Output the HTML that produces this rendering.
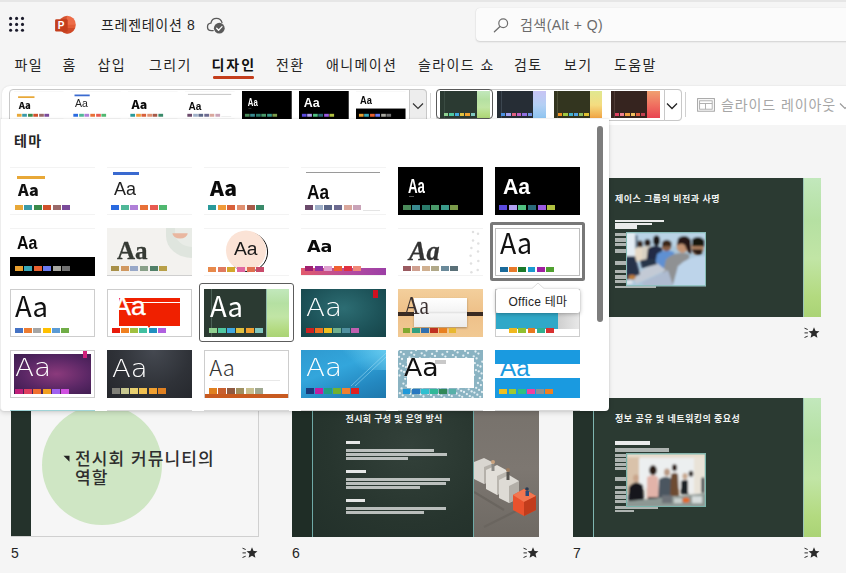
<!DOCTYPE html>
<html lang="ko"><head><meta charset="utf-8"><title>PowerPoint</title>
<style>
*{box-sizing:border-box;margin:0;padding:0}
html,body{width:846px;height:573px;overflow:hidden}
body{position:relative;background:#f5f5f5;font-family:"Liberation Sans","Noto Sans CJK KR","NanumGothic",sans-serif;color:#242424}
.a{position:absolute}
.t{position:absolute;white-space:nowrap;line-height:1}
.tab{position:absolute;top:54.5px;font-size:14px;line-height:20px;color:#242424;white-space:nowrap;letter-spacing:1.4px}
.sw{position:absolute;display:flex}
.sw i{display:block;flex:none}
.th{position:absolute;overflow:hidden}
.aa{position:absolute;white-space:nowrap;line-height:1}
.sl{position:absolute;overflow:hidden}
.num{position:absolute;font-size:14px;line-height:1;color:#242424}
</style></head>
<body>
<div class="a" style="left:0;top:0;width:846px;height:86px;background:#f5f5f5"></div>
<div class="a" style="left:0;top:0;width:846px;height:1.5px;background:#e6e6e6"></div>
<svg class="a" style="left:0;top:0" width="40" height="45" fill="#1b1b2b"><circle cx="10.6" cy="18.4" r="1.55"/><circle cx="16.6" cy="18.4" r="1.55"/><circle cx="22.5" cy="18.4" r="1.55"/><circle cx="10.6" cy="24.4" r="1.55"/><circle cx="16.6" cy="24.4" r="1.55"/><circle cx="22.5" cy="24.4" r="1.55"/><circle cx="10.6" cy="30.3" r="1.55"/><circle cx="16.6" cy="30.3" r="1.55"/><circle cx="22.5" cy="30.3" r="1.55"/></svg>
<svg class="a" style="left:52px;top:12px" width="28" height="26" viewBox="52 12 28 26">
<defs><clipPath id="pc"><ellipse cx="67.3" cy="24.7" rx="8.5" ry="9"/></clipPath></defs>
<g clip-path="url(#pc)"><rect x="56" y="14" width="11" height="22" fill="#d35230"/><rect x="66.7" y="14" width="12" height="11" fill="#ed6c47"/><rect x="66.7" y="24.8" width="12" height="12" fill="#e25c35"/><rect x="58" y="28" width="20" height="10" fill="#c13b1b" opacity=".55"/></g>
<rect x="55.1" y="19.2" width="12.6" height="12.3" rx="1.2" fill="#c43e1c"/>
<text x="61" y="29.1" font-family="Liberation Sans,sans-serif" font-weight="700" font-size="10" fill="#fff" text-anchor="middle">P</text></svg>
<div class="t" style="left:101px;top:16.5px;font-size:14px;line-height:16px;letter-spacing:.7px;color:#242424">프레젠테이션 8</div>
<svg class="a" style="left:205px;top:14px" width="24" height="22" viewBox="205 14 24 22">
<path d="M213.2 30.6h-1.8c-2.2 0-3.9-1.6-3.9-3.7 0-2 1.5-3.5 3.4-3.7.5-2.9 2.7-4.9 5.6-4.9 2.7 0 4.9 1.8 5.5 4.3" fill="none" stroke="#5a5a5a" stroke-width="1.3" stroke-linecap="round"/>
<circle cx="219.3" cy="28.2" r="5.4" fill="#5a5a5a"/>
<path d="M216.7 28.3l1.9 1.9 3.4-3.6" fill="none" stroke="#fff" stroke-width="1.3" stroke-linecap="round" stroke-linejoin="round"/></svg>
<div class="a" style="left:476px;top:8px;width:380px;height:33px;background:#fbfbfb;border-radius:4px;box-shadow:0 1px 2px rgba(0,0,0,.14),0 0 1px rgba(0,0,0,.12)"></div>
<svg class="a" style="left:490px;top:15px" width="22" height="20" viewBox="490 15 22 20"><circle cx="503.2" cy="23.3" r="4.4" fill="none" stroke="#6e6e6e" stroke-width="1.2"/><path d="M500 26.6l-5.6 5.2" stroke="#6e6e6e" stroke-width="1.3" stroke-linecap="round"/></svg>
<div class="t" style="left:520px;top:17px;font-size:14px;line-height:16px;letter-spacing:.45px;color:#6b6b6b">검색(Alt + Q)</div>
<div class="tab" style="left:14.4px">파일</div>
<div class="tab" style="left:62.4px">홈</div>
<div class="tab" style="left:97.5px">삽입</div>
<div class="tab" style="left:149px">그리기</div>
<div class="tab" style="left:211.6px;font-weight:700;color:#111;letter-spacing:1.9px">디자인</div>
<div class="tab" style="left:276px">전환</div>
<div class="tab" style="left:326px">애니메이션</div>
<div class="tab" style="left:418px">슬라이드 쇼</div>
<div class="tab" style="left:514px">검토</div>
<div class="tab" style="left:564px">보기</div>
<div class="tab" style="left:614px">도움말</div>
<div class="a" style="left:212.5px;top:76.3px;width:41.5px;height:2.6px;border-radius:1.3px;background:#c43e1c"></div>
<div class="a" style="left:2px;top:86px;width:860px;height:39.3px;background:#fff;border-top-left-radius:8px;box-shadow:0 0 2px rgba(0,0,0,.12)"></div>
<div class="a" style="left:9px;top:89px;width:418px;height:40px;border:1px solid #c8c8c8;border-radius:4px;background:#fff"></div>
<div class="th" style="left:14px;top:90.75px;width:85px;height:48px;background:#fff;transform:scale(0.5850);transform-origin:0 0"><div class="a" style="left:7px;top:9px;width:28px;height:3px;background:#e8a838"></div><div class="aa" style="left:8.16px;top:15.65px;font:normal 900 15.26px/1 'Noto Sans CJK KR',sans-serif;color:#111;transform:scaleX(1.060);transform-origin:0 0">Aa</div><div class="sw" style="left:4.5px;top:38.5px"><i style="width:8px;height:5px;background:#e8a838;margin-right:1.6px"></i><i style="width:8px;height:5px;background:#3a9aa8;margin-right:1.6px"></i><i style="width:8px;height:5px;background:#3a8a4a;margin-right:1.6px"></i><i style="width:8px;height:5px;background:#d0502a;margin-right:1.6px"></i><i style="width:8px;height:5px;background:#9a6a6a;margin-right:1.6px"></i><i style="width:8px;height:5px;background:#7a4a9a;margin-right:1.6px"></i></div><div class="a" style="left:0px;top:0px;width:85px;height:48px;background:transparent;border-top:1px solid #f3f3f3;border-bottom:1px solid #f3f3f3"></div></div>
<div class="th" style="left:71px;top:90.75px;width:85px;height:48px;background:#fff;transform:scale(0.5850);transform-origin:0 0"><div class="a" style="left:5.5px;top:5.5px;width:26.5px;height:3px;background:#3a6ad0"></div><div class="aa" style="left:6.75px;top:13.23px;font:normal 400 18.57px/1 'Liberation Sans',sans-serif;color:#222;transform:scaleX(0.970);transform-origin:0 0">Aa</div><div class="sw" style="left:4.25px;top:38.5px"><i style="width:8px;height:5px;background:#2a6ae0;margin-right:1.6px"></i><i style="width:8px;height:5px;background:#50b898;margin-right:1.6px"></i><i style="width:8px;height:5px;background:#b080d8;margin-right:1.6px"></i><i style="width:8px;height:5px;background:#e87038;margin-right:1.6px"></i><i style="width:8px;height:5px;background:#e85a50;margin-right:1.6px"></i><i style="width:8px;height:5px;background:#50b870;margin-right:1.6px"></i></div><div class="a" style="left:0px;top:0px;width:85px;height:48px;background:transparent;border-top:1px solid #f3f3f3;border-bottom:1px solid #f3f3f3"></div></div>
<div class="th" style="left:128px;top:90.75px;width:85px;height:48px;background:#fff;transform:scale(0.5850);transform-origin:0 0"><div class="aa" style="left:6.21px;top:11.65px;font:normal 900 19.74px/1 'Noto Sans CJK KR',sans-serif;color:#0a0a0a;transform:scaleX(1.070);transform-origin:0 0">Aa</div><div class="sw" style="left:4px;top:38.5px"><i style="width:8px;height:5px;background:#2a9a9a;margin-right:1.6px"></i><i style="width:8px;height:5px;background:#f09a38;margin-right:1.6px"></i><i style="width:8px;height:5px;background:#d8603a;margin-right:1.6px"></i><i style="width:8px;height:5px;background:#e09070;margin-right:1.6px"></i><i style="width:8px;height:5px;background:#a85a48;margin-right:1.6px"></i><i style="width:8px;height:5px;background:#3a8a6a;margin-right:1.6px"></i></div><div class="a" style="left:0px;top:0px;width:85px;height:48px;background:transparent;border-top:1px solid #f3f3f3;border-bottom:1px solid #f3f3f3"></div></div>
<div class="th" style="left:185px;top:90.75px;width:85px;height:48px;background:#fff;transform:scale(0.5850);transform-origin:0 0"><div class="a" style="left:5px;top:5px;width:74px;height:1px;background:#9a9a9a"></div><div class="aa" style="left:5.98px;top:15.00px;font:normal 700 20.00px/1 'Liberation Sans',sans-serif;color:#0a0a0a;transform:scaleX(0.860);transform-origin:0 0">Aa</div><div class="sw" style="left:4px;top:38.5px"><i style="width:8px;height:5px;background:#6b4a6b;margin-right:1.6px"></i><i style="width:8px;height:5px;background:#9fb0c8;margin-right:1.6px"></i><i style="width:8px;height:5px;background:#5b6788;margin-right:1.6px"></i><i style="width:8px;height:5px;background:#6c6a90;margin-right:1.6px"></i><i style="width:8px;height:5px;background:#d9a79c;margin-right:1.6px"></i><i style="width:8px;height:5px;background:#c9a3b8;margin-right:1.6px"></i></div><div class="a" style="left:62px;top:43px;width:17px;height:1px;background:#e4e4e4"></div><div class="a" style="left:0px;top:0px;width:85px;height:48px;background:transparent;border-top:1px solid #f3f3f3;border-bottom:1px solid #f3f3f3"></div></div>
<div class="th" style="left:241.5px;top:90.75px;width:85px;height:48px;background:#000;transform:scale(0.5850);transform-origin:0 0"><div class="aa" style="left:10.35px;top:10.11px;font:normal 700 19.29px/1 'Liberation Sans',sans-serif;color:#fff;transform:scaleX(0.690);transform-origin:0 0">Aa</div><div class="a" style="left:11px;top:29px;width:5px;height:1px;background:#555"></div><div class="sw" style="left:4.5px;top:38.5px"><i style="width:8px;height:5px;background:#4a8a5a;margin-right:1.6px"></i><i style="width:8px;height:5px;background:#3a8a90;margin-right:1.6px"></i><i style="width:8px;height:5px;background:#2a7a6a;margin-right:1.6px"></i><i style="width:8px;height:5px;background:#4a9a6a;margin-right:1.6px"></i><i style="width:8px;height:5px;background:#3a9a8a;margin-right:1.6px"></i><i style="width:8px;height:5px;background:#7a9a4a;margin-right:1.6px"></i></div></div>
<div class="th" style="left:298.5px;top:90.75px;width:85px;height:48px;background:#000;transform:scale(0.5850);transform-origin:0 0"><div class="aa" style="left:7.86px;top:8.54px;font:normal 700 22.86px/1 'Liberation Sans',sans-serif;color:#fff;transform:scaleX(0.930);transform-origin:0 0">Aa</div><div class="sw" style="left:4.5px;top:38.5px"><i style="width:8px;height:5px;background:#5a4ae0;margin-right:1.6px"></i><i style="width:8px;height:5px;background:#b0a0f0;margin-right:1.6px"></i><i style="width:8px;height:5px;background:#50c080;margin-right:1.6px"></i><i style="width:8px;height:5px;background:#2a6a7a;margin-right:1.6px"></i><i style="width:8px;height:5px;background:#9a5ae0;margin-right:1.6px"></i><i style="width:8px;height:5px;background:#b0c040;margin-right:1.6px"></i></div></div>
<div class="th" style="left:355.5px;top:90.75px;width:85px;height:48px;background:#fff;transform:scale(0.5850);transform-origin:0 0"><div class="a" style="left:0px;top:29.5px;width:85px;height:18.5px;background:#000"></div><div class="aa" style="left:6.52px;top:6.92px;font:normal 700 18.93px/1 'Liberation Sans',sans-serif;color:#0a0a0a;transform:scaleX(0.840);transform-origin:0 0">Aa</div><div class="sw" style="left:4.5px;top:38.75px"><i style="width:8px;height:5px;background:#e8a030;margin-right:1.6px"></i><i style="width:8px;height:5px;background:#38a8b8;margin-right:1.6px"></i><i style="width:8px;height:5px;background:#e86030;margin-right:1.6px"></i><i style="width:8px;height:5px;background:#6a7af0;margin-right:1.6px"></i><i style="width:8px;height:5px;background:#a8a8a0;margin-right:1.6px"></i><i style="width:8px;height:5px;background:#707070;margin-right:1.6px"></i></div><div class="a" style="left:0px;top:0px;width:85px;height:1px;background:#f3f3f3"></div></div>
<div class="a" style="left:409px;top:89px;width:18px;height:40px;background:#ededed;border:1px solid #c8c8c8;border-radius:0 4px 4px 0"></div>
<svg class="a" style="left:411px;top:101px" width="14" height="10"><path d="M2 2.5l5 5 5-5" fill="none" stroke="#333" stroke-width="1.2"/></svg>
<div class="a" style="left:430px;top:93px;width:1px;height:25px;background:#d6d6d6"></div>
<div class="a" style="left:435.5px;top:89px;width:246px;height:32px;border:1px solid #c8c8c8;border-radius:4px;background:#fff"></div>
<div class="a" style="left:435.5px;top:89.2px;width:57.5px;height:29.9px;border:1px solid #5a5a5a;border-radius:4px;background:#fff"></div>
<div class="th" style="left:440px;top:91px;width:49.5px;height:27.1px;background:#2b3a32"><div class="a" style="left:36.63px;top:0px;width:13.87px;height:28px;background:linear-gradient(180deg,#c2e8bc 0%,#b5e0a2 30%,#c1e5a5 58%,#b3da80 85%,#aad375 100%)"></div><div class="a" style="left:3.5px;top:0px;width:0.7px;height:28px;background:#3a4b42"></div><div class="sw" style="left:4.2px;top:22px"><i style="width:4.3px;height:2.7px;background:#90d090;margin-right:1px"></i><i style="width:4.3px;height:2.7px;background:#50c8a0;margin-right:1px"></i><i style="width:4.3px;height:2.7px;background:#40a8e0;margin-right:1px"></i><i style="width:4.3px;height:2.7px;background:#e0c040;margin-right:1px"></i><i style="width:4.3px;height:2.7px;background:#f0a030;margin-right:1px"></i><i style="width:4.3px;height:2.7px;background:#80c8c0;margin-right:1px"></i></div></div>
<div class="th" style="left:497px;top:91px;width:48.5px;height:27.1px;background:#262d35"><div class="a" style="left:35.89px;top:0px;width:13.61px;height:28px;background:linear-gradient(180deg,#c8c4f4,#b4d0f4 50%,#8cc4f0)"></div><div class="a" style="left:3.5px;top:0px;width:0.7px;height:28px;background:#3c4650"></div><div class="sw" style="left:4.2px;top:22px"><i style="width:4.3px;height:2.7px;background:#4a90e0;margin-right:1px"></i><i style="width:4.3px;height:2.7px;background:#a0a0f0;margin-right:1px"></i><i style="width:4.3px;height:2.7px;background:#e06080;margin-right:1px"></i><i style="width:4.3px;height:2.7px;background:#c060c0;margin-right:1px"></i><i style="width:4.3px;height:2.7px;background:#9070e0;margin-right:1px"></i><i style="width:4.3px;height:2.7px;background:#7090e0;margin-right:1px"></i></div></div>
<div class="th" style="left:553.75px;top:91px;width:48.5px;height:27.1px;background:#33351f"><div class="a" style="left:35.89px;top:0px;width:13.61px;height:28px;background:linear-gradient(180deg,#e0e890,#f4dc80 50%,#f0a040)"></div><div class="a" style="left:3.5px;top:0px;width:0.7px;height:28px;background:#4c4e36"></div><div class="sw" style="left:4.2px;top:22px"><i style="width:4.3px;height:2.7px;background:#f09020;margin-right:1px"></i><i style="width:4.3px;height:2.7px;background:#a0c840;margin-right:1px"></i><i style="width:4.3px;height:2.7px;background:#40b0d0;margin-right:1px"></i><i style="width:4.3px;height:2.7px;background:#50a0e0;margin-right:1px"></i><i style="width:4.3px;height:2.7px;background:#90c060;margin-right:1px"></i><i style="width:4.3px;height:2.7px;background:#e0c030;margin-right:1px"></i></div></div>
<div class="th" style="left:610.5px;top:91px;width:49.5px;height:27.1px;background:#36241f"><div class="a" style="left:36.63px;top:0px;width:13.87px;height:28px;background:linear-gradient(180deg,#f0a070,#f07060 50%,#e84050)"></div><div class="a" style="left:3.5px;top:0px;width:0.7px;height:28px;background:#4e3a34"></div><div class="sw" style="left:4.2px;top:22px"><i style="width:4.3px;height:2.7px;background:#e04060;margin-right:1px"></i><i style="width:4.3px;height:2.7px;background:#f08090;margin-right:1px"></i><i style="width:4.3px;height:2.7px;background:#f0a040;margin-right:1px"></i><i style="width:4.3px;height:2.7px;background:#f0c060;margin-right:1px"></i><i style="width:4.3px;height:2.7px;background:#e06040;margin-right:1px"></i><i style="width:4.3px;height:2.7px;background:#c04050;margin-right:1px"></i></div></div>
<div class="a" style="left:664px;top:89px;width:17.5px;height:32px;background:#fff;border:1px solid #c8c8c8;border-radius:0 4px 4px 0"></div>
<svg class="a" style="left:665px;top:101px" width="14" height="10"><path d="M2 2.5l5 5 5-5" fill="none" stroke="#222" stroke-width="1.3"/></svg>
<div class="a" style="left:685px;top:92px;width:1px;height:25px;background:#d0d0d0"></div>
<svg class="a" style="left:690px;top:92px" width="30" height="24" viewBox="690 92 30 24"><rect x="697.6" y="98.600" width="16.800" height="12.600" fill="none" stroke="#a3a3a3" stroke-width="1"/><rect x="699.6" y="100.800" width="12.600" height="8.400" fill="none" stroke="#a9a9a9" stroke-width=".9"/><path d="M699.6 103.500h12.600M705.500 103.500v5.700" stroke="#a9a9a9" stroke-width=".9" fill="none"/></svg>
<div class="t" style="left:721px;top:97px;font-size:14px;line-height:16px;letter-spacing:.9px;color:#a6a6a6">슬라이드 레이아웃</div>
<svg class="a" style="left:838px;top:101px" width="12" height="10"><path d="M2 2.5l5 5 5-5" fill="none" stroke="#9a9a9a" stroke-width="1.2"/></svg>
<div class="a" style="left:0;top:125.3px;width:846px;height:448px;background:#f5f5f5"></div>
<div class="sl" style="left:573px;top:177.5px;width:248px;height:139.5px;background:#2b3a32"><div class="a" style="left:0px;top:0px;width:20.5px;height:139.5px;background:#24322b"></div><div class="a" style="left:20px;top:0px;width:1px;height:139.5px;background:#7fb5b0"></div><div class="a" style="left:230.3px;top:0px;width:17.7px;height:139.5px;background:linear-gradient(180deg,#c2e8bc 0%,#b5e0a2 30%,#c1e5a5 58%,#b3da80 85%,#aad375 100%)"></div><div class="a" style="left:230px;top:0px;width:0.8px;height:139.5px;background:#9cc7b6"></div><div class="t" style="left:42px;top:17.5px;font-size:9px;font-weight:700;color:#f2f4f2;letter-spacing:.45px">제이스 그룹의 비전과 사명</div><div class="a" style="left:42px;top:42.5px;width:49px;height:2.3px;background:rgba(255,255,255,0.9)"></div><div class="a" style="left:42px;top:45.3px;width:37px;height:2px;background:rgba(255,255,255,0.9)"></div><div class="a" style="left:42px;top:47.7px;width:22px;height:3.4px;background:rgba(255,255,255,0.9)"></div><div class="a" style="left:42px;top:55.5px;width:11px;height:3px;background:rgba(255,255,255,0.62)"></div><div class="a" style="left:42px;top:60.5px;width:11px;height:3.6px;background:rgba(255,255,255,0.62)"></div><div class="a" style="left:42px;top:65.1px;width:11px;height:3.4px;background:rgba(255,255,255,0.62)"></div><div class="a" style="left:42px;top:71.3px;width:11px;height:3.8px;background:rgba(255,255,255,0.62)"></div><div class="a" style="left:42px;top:83.5px;width:11px;height:3.6px;background:rgba(255,255,255,0.62)"></div><div class="a" style="left:42px;top:92.5px;width:11px;height:3.4px;background:rgba(255,255,255,0.62)"></div><div class="a" style="left:42px;top:97.5px;width:11px;height:3.6px;background:rgba(255,255,255,0.62)"></div><div class="a" style="left:42px;top:102.2px;width:11px;height:2.9px;background:rgba(255,255,255,0.62)"></div><div class="a" style="left:42px;top:108.1px;width:41px;height:2.8px;background:rgba(255,255,255,0.62)"></div><svg class="a" style="left:52.8px;top:54.8px" width="80" height="54.4" viewBox="0 0 80 54"><defs><filter id="bl1" x="-5%" y="-5%" width="110%" height="110%"><feGaussianBlur stdDeviation=".9"/></filter><clipPath id="cp1"><rect width="80" height="54"/></clipPath></defs><rect width="80" height="54" fill="#a9c6db"/><g clip-path="url(#cp1)"><g filter="url(#bl1)"><rect x="0" y="0" width="80" height="14" fill="#b9d3e6"/><rect x="0" y="0" width="9" height="30" fill="#e3ecf3"/><rect x="9" y="3" width="3" height="24" fill="#6f879c"/><ellipse cx="14" cy="12" rx="3" ry="3.6" fill="#3a2a22"/><rect x="9" y="15" width="10" height="14" rx="3" fill="#e6d9c6"/><ellipse cx="21.5" cy="10.5" rx="3.2" ry="3.8" fill="#2a1d18"/><rect x="16" y="14" width="11" height="16" rx="3" fill="#d9d2c4"/><ellipse cx="30.5" cy="8.5" rx="3.6" ry="5.5" fill="#1c1614"/><path d="M22 16q8-5 14 0l2 16H20z" fill="#202b45"/><path d="M31 22q8-6 17-2l3 18H28z" fill="#5f90d2"/><ellipse cx="40.5" cy="13.5" rx="4.6" ry="5.6" fill="#8a5f44"/><path d="M36 10q5-5 9.5 0v4h-9.5z" fill="#3b2618"/><path d="M40 27q10-9 23-5l3 30H34z" fill="#8f9193"/><ellipse cx="56.5" cy="13.5" rx="6" ry="7.2" fill="#c39373"/><path d="M52 6q8-5 13 2v14q-4-2-6-9-3-3-8 0z" fill="#261812"/><path d="M52 34q12-12 30-10v32H46z" fill="#bdd4ea"/><ellipse cx="71.5" cy="14.5" rx="6.2" ry="8.6" fill="#b48463"/><path d="M66 7q7-5 12.5 1v6h-12.5z" fill="#17120f"/><path d="M65.5 17q4 8 10 5l1-5z" fill="#2a1d16"/><path d="M30 30L6 44l4 8 30-14z" fill="#c3cad5"/><path d="M42 38L16 50l2 6h30z" fill="#aebbd0"/><path d="M14 28l14-2 3 6-15 4z" fill="#27344a"/><path d="M0 24h9l5 18-14 6z" fill="#26304a"/><ellipse cx="6" cy="45" rx="3.6" ry="2.4" fill="#b9793a"/><ellipse cx="3" cy="50" rx="4" ry="2" fill="#dfe4ea"/></g></g><rect x=".5" y=".5" width="79" height="53" fill="none" stroke="#86bdb7" stroke-width="1"/></svg></div>
<svg class="a" style="left:802.6px;top:327.2px" width="17" height="12" viewBox="0 0 17 12"><path d="M11 0.3l1.55 3.6 3.9.35-2.95 2.6.9 3.85L11 8.65 7.6 10.7l.9-3.85-2.95-2.6 3.9-.35z" fill="#2b2b2b"/><path d="M1.500 1.200l3.200 1.300M1.500 5.900h3.400M1.500 10.500l3.200-1.300" stroke="#2b2b2b" stroke-width="1" fill="none"/></svg>
<div class="sl" style="left:573px;top:397.5px;width:248px;height:139.5px;background:#2b3a32"><div class="a" style="left:0px;top:0px;width:20.5px;height:139.5px;background:#24322b"></div><div class="a" style="left:20px;top:0px;width:1px;height:139.5px;background:#7fb5b0"></div><div class="a" style="left:230.3px;top:0px;width:17.7px;height:139.5px;background:linear-gradient(180deg,#c2e8bc 0%,#b5e0a2 30%,#c1e5a5 58%,#b3da80 85%,#aad375 100%)"></div><div class="a" style="left:230px;top:0px;width:0.8px;height:139.5px;background:#9cc7b6"></div><div class="t" style="left:42px;top:17.5px;font-size:9px;font-weight:700;color:#f2f4f2;letter-spacing:.45px">정보 공유 및 네트워킹의 중요성</div><div class="a" style="left:42px;top:43.5px;width:35px;height:3.6px;background:rgba(255,255,255,0.9)"></div><div class="a" style="left:42px;top:50.5px;width:54px;height:4px;background:rgba(255,255,255,0.62)"></div><div class="a" style="left:42px;top:56.2px;width:12px;height:3.5px;background:rgba(255,255,255,0.62)"></div><div class="a" style="left:42px;top:60.5px;width:12px;height:3.6px;background:rgba(255,255,255,0.62)"></div><div class="a" style="left:42px;top:65.5px;width:12px;height:3.2px;background:rgba(255,255,255,0.62)"></div><div class="a" style="left:42px;top:69.5px;width:12px;height:3px;background:rgba(255,255,255,0.62)"></div><div class="a" style="left:42px;top:79.9px;width:12px;height:3.4px;background:rgba(255,255,255,0.62)"></div><div class="a" style="left:42px;top:88.1px;width:12px;height:3.4px;background:rgba(255,255,255,0.62)"></div><div class="a" style="left:42px;top:93.3px;width:12px;height:3.4px;background:rgba(255,255,255,0.62)"></div><div class="a" style="left:42px;top:97.5px;width:12px;height:3.6px;background:rgba(255,255,255,0.62)"></div><div class="a" style="left:42px;top:102.2px;width:12px;height:3.5px;background:rgba(255,255,255,0.62)"></div><div class="a" style="left:42px;top:108.1px;width:43px;height:3px;background:rgba(255,255,255,0.62)"></div><div class="a" style="left:42px;top:112.5px;width:19px;height:2.3px;background:rgba(255,255,255,0.62)"></div><svg class="a" style="left:52.8px;top:55.5px" width="80" height="54.4" viewBox="0 0 80 54"><defs><filter id="bl2" x="-5%" y="-5%" width="110%" height="110%"><feGaussianBlur stdDeviation=".9"/></filter><clipPath id="cp2"><rect width="80" height="54"/></clipPath></defs><rect width="80" height="54" fill="#e4e2dd"/><g clip-path="url(#cp2)"><g filter="url(#bl2)"><rect x="0" y="0" width="14" height="40" fill="#d9c2aa"/><rect x="13" y="5" width="55" height="30" fill="#eceff0"/><rect x="68" y="0" width="12" height="40" fill="#e9e3d8"/><rect x="0" y="0" width="80" height="4" fill="#e8dccb"/><ellipse cx="10" cy="25" rx="3" ry="3.6" fill="#c9a58b"/><path d="M3 34q6-8 14-2l1 18H2z" fill="#17181b"/><path d="M21 24q6-4 11 0l1 22H21z" fill="#e2b3a9"/><ellipse cx="27" cy="17" rx="3.8" ry="5" fill="#2a1a15"/><rect x="22" y="44" width="10" height="8" fill="#1d1e22"/><path d="M33 26q7-5 13 0l1 24H32z" fill="#4b5661"/><ellipse cx="41" cy="19" rx="3" ry="3.8" fill="#b99a84"/><path d="M45 21q4-3 7 0l1 22h-9z" fill="#6d4c33"/><ellipse cx="48.5" cy="14.5" rx="2.6" ry="3.4" fill="#33221a"/><path d="M55 28q4-3 8 0v13h-8z" fill="#1d2127"/><ellipse cx="59" cy="23" rx="2.6" ry="3.3" fill="#c8a78e"/><path d="M62 26q3-2 6 0v14h-6z" fill="#edeeee"/><ellipse cx="65" cy="20.5" rx="2.3" ry="3" fill="#2b211d"/><rect x="75.500" y="24" width="3" height="16" rx="1.5" fill="#22303a"/><path d="M0 48l80-8v14H0z" fill="#8d9894"/><rect x="36" y="42" width="10" height="8" fill="#6d7278"/><ellipse cx="60" cy="47" rx="3.6" ry="2.6" fill="#e0692c"/><rect x="66" y="43" width="10" height="7" fill="#d6dcdc"/><rect x="48" y="45" width="8" height="5" fill="#c9d0ce"/></g></g><rect x=".6" y=".6" width="78.800" height="52.800" fill="none" stroke="#7ab3ab" stroke-width="1.3"/></svg></div>
<div class="num" style="left:573px;top:546px">7</div>
<svg class="a" style="left:802.6px;top:547.2px" width="17" height="12" viewBox="0 0 17 12"><path d="M11 0.3l1.55 3.6 3.9.35-2.95 2.6.9 3.85L11 8.65 7.6 10.7l.9-3.85-2.95-2.6 3.9-.35z" fill="#2b2b2b"/><path d="M1.500 1.200l3.200 1.300M1.500 5.900h3.400M1.500 10.500l3.200-1.300" stroke="#2b2b2b" stroke-width="1" fill="none"/></svg>
<div class="sl" style="left:11px;top:397.5px;width:248px;height:139.5px;background:#f6f6f6;border-right:1px solid #d0d0d0;border-bottom:1px solid #d0d0d0"><div class="a" style="left:0px;top:0px;width:19.5px;height:140px;background:#24322b"></div><div class="a" style="left:31px;top:7.5px;width:120px;height:120px;border-radius:50%;background:#cfe6c4"></div><svg class="a" style="left:52px;top:57px" width="8" height="8"><path d="M0.5 0.8h6v6z" fill="#222"/></svg><div class="t" style="left:64px;top:52px;font-size:17px;line-height:19.5px;color:#2e2e2e;font-weight:500;letter-spacing:1.1px;white-space:normal;width:190px">전시회 커뮤니티의<br>역할</div></div>
<div class="num" style="left:11px;top:546px">5</div>
<svg class="a" style="left:241.1px;top:547.2px" width="17" height="12" viewBox="0 0 17 12"><path d="M11 0.3l1.55 3.6 3.9.35-2.95 2.6.9 3.85L11 8.65 7.6 10.7l.9-3.85-2.95-2.6 3.9-.35z" fill="#2b2b2b"/><path d="M1.500 1.200l3.200 1.300M1.500 5.900h3.400M1.500 10.500l3.200-1.300" stroke="#2b2b2b" stroke-width="1" fill="none"/></svg>
<div class="sl" style="left:291.6px;top:397.5px;width:247.8px;height:139.5px;background:#25332c"><div class="a" style="left:0px;top:0px;width:20px;height:140px;background:#1f2d26"></div><div class="a" style="left:20px;top:0px;width:1px;height:140px;background:#6fa9a6"></div><div class="a" style="left:21px;top:0px;width:161px;height:140px;background:radial-gradient(ellipse at 60% 35%,#33413a 0%,#27352e 60%,#22302a 100%)"></div><div class="a" style="left:181.5px;top:0px;width:1px;height:140px;background:#6fa9a6"></div><div class="a" style="left:182.5px;top:0px;width:66px;height:140px;background:linear-gradient(180deg,#76716b 0%,#7d7771 50%,#6e6963 100%)"></div><svg class="a" style="left:182px;top:54.5px" width="66" height="80" viewBox="0 0 66 80"><path d="M0 40l30 18M10 75l40-20" stroke="#6a655f" stroke-width="2.2" fill="none"/><path d="M0 10l10-4 10 5v16l-10 5-10-5z" fill="#d9d6d0"/><path d="M10 15l10-4v16l-10 5z" fill="#b5b1aa"/><path d="M12 18l11-5 11 6v18l-11 6-11-6z" fill="#e2dfd9"/><path d="M23 24l11-5v18l-11 6z" fill="#bab6af"/><path d="M25 28l10-5 10 6v17l-10 5-10-5z" fill="#dedbd5"/><path d="M35 34l10-5v17l-10 5z" fill="#b3afa8"/><path d="M39 43l11-6 12 7v14l-12 6-11-6z" fill="#e9522d"/><path d="M39 43l11-6 12 7-12 6z" fill="#f27650"/><path d="M50 50l12-6v14l-12 6z" fill="#c13c1c"/><circle cx="19" cy="10" r="2" fill="#c9a27e"/><rect x="17.5" y="12" width="3" height="7" fill="#8b8a86"/><circle cx="34" cy="18" r="2" fill="#9a7a5e"/><rect x="32.5" y="20" width="3" height="8" fill="#55534f"/><circle cx="53" cy="37" r="1.8" fill="#2b3a52"/><rect x="51.5" y="39" width="3.5" height="5" fill="#2b4a7a"/></svg><div class="t" style="left:54px;top:17px;font-size:9px;font-weight:700;color:#eef1ee;letter-spacing:.3px">전시회 구성 및 운영 방식</div><div class="a" style="left:54px;top:43px;width:14px;height:3.4px;background:rgba(255,255,255,.88)"></div><div class="a" style="left:54px;top:51.4px;width:88px;height:3.1px;background:rgba(255,255,255,.68)"></div><div class="a" style="left:54px;top:55.55px;width:101px;height:3.1px;background:rgba(255,255,255,.68)"></div><div class="a" style="left:54px;top:59.7px;width:62px;height:3.1px;background:rgba(255,255,255,.68)"></div><div class="a" style="left:54px;top:72px;width:20px;height:3.4px;background:rgba(255,255,255,.88)"></div><div class="a" style="left:54px;top:80.4px;width:104px;height:3.1px;background:rgba(255,255,255,.68)"></div><div class="a" style="left:54px;top:84.55px;width:100px;height:3.1px;background:rgba(255,255,255,.68)"></div><div class="a" style="left:54px;top:88.7px;width:74px;height:3.1px;background:rgba(255,255,255,.68)"></div><div class="a" style="left:54px;top:101.2px;width:19px;height:3.4px;background:rgba(255,255,255,.88)"></div><div class="a" style="left:54px;top:109.6px;width:100px;height:3.1px;background:rgba(255,255,255,.68)"></div><div class="a" style="left:54px;top:113.75px;width:78px;height:3.1px;background:rgba(255,255,255,.68)"></div></div>
<div class="num" style="left:292px;top:546px">6</div>
<svg class="a" style="left:522.1px;top:547.2px" width="17" height="12" viewBox="0 0 17 12"><path d="M11 0.3l1.55 3.6 3.9.35-2.95 2.6.9 3.85L11 8.65 7.6 10.7l.9-3.85-2.95-2.6 3.9-.35z" fill="#2b2b2b"/><path d="M1.500 1.200l3.200 1.300M1.500 5.900h3.400M1.500 10.500l3.200-1.300" stroke="#2b2b2b" stroke-width="1" fill="none"/></svg>
<div class="a" style="left:0;top:119.1px;width:608.5px;height:292.1px;background:#fff;border-left:1px solid #ededed;border-radius:0 0 4px 4px;box-shadow:0 2px 5px rgba(0,0,0,.13),0 0 2px rgba(0,0,0,.14)"></div>
<div class="t" style="left:14px;top:132.5px;font-size:14px;line-height:16px;font-weight:700;letter-spacing:1.3px;color:#242424">테마</div>
<div class="a" style="left:597px;top:125.5px;width:6px;height:196px;border-radius:3px;background:#7d7d7d"></div>
<div class="a" style="left:490px;top:222px;width:95px;height:58.5px;border:3.3px solid #787878;border-radius:2.5px;background:#fff"></div>
<div class="a" style="left:199px;top:283px;width:94.5px;height:58.5px;border:1px solid #5c5c5c;border-radius:3px;background:#fff"></div>
<div class="th" style="left:10px;top:166.75px;width:85px;height:48px;background:#fff"><div class="a" style="left:7px;top:9px;width:28px;height:3px;background:#e8a838"></div><div class="aa" style="left:8.16px;top:15.65px;font:normal 900 15.26px/1 'Noto Sans CJK KR',sans-serif;color:#111;transform:scaleX(1.060);transform-origin:0 0">Aa</div><div class="sw" style="left:4.5px;top:38.5px"><i style="width:8px;height:5px;background:#e8a838;margin-right:1.6px"></i><i style="width:8px;height:5px;background:#3a9aa8;margin-right:1.6px"></i><i style="width:8px;height:5px;background:#3a8a4a;margin-right:1.6px"></i><i style="width:8px;height:5px;background:#d0502a;margin-right:1.6px"></i><i style="width:8px;height:5px;background:#9a6a6a;margin-right:1.6px"></i><i style="width:8px;height:5px;background:#7a4a9a;margin-right:1.6px"></i></div><div class="a" style="left:0px;top:0px;width:85px;height:48px;background:transparent;border-top:1px solid #f3f3f3;border-bottom:1px solid #f3f3f3"></div></div>
<div class="th" style="left:107px;top:166.75px;width:85px;height:48px;background:#fff"><div class="a" style="left:5.5px;top:5.5px;width:26.5px;height:3px;background:#3a6ad0"></div><div class="aa" style="left:6.75px;top:13.23px;font:normal 400 18.57px/1 'Liberation Sans',sans-serif;color:#222;transform:scaleX(0.970);transform-origin:0 0">Aa</div><div class="sw" style="left:4.25px;top:38.5px"><i style="width:8px;height:5px;background:#2a6ae0;margin-right:1.6px"></i><i style="width:8px;height:5px;background:#50b898;margin-right:1.6px"></i><i style="width:8px;height:5px;background:#b080d8;margin-right:1.6px"></i><i style="width:8px;height:5px;background:#e87038;margin-right:1.6px"></i><i style="width:8px;height:5px;background:#e85a50;margin-right:1.6px"></i><i style="width:8px;height:5px;background:#50b870;margin-right:1.6px"></i></div><div class="a" style="left:0px;top:0px;width:85px;height:48px;background:transparent;border-top:1px solid #f3f3f3;border-bottom:1px solid #f3f3f3"></div></div>
<div class="th" style="left:204.25px;top:166.75px;width:85px;height:48px;background:#fff"><div class="aa" style="left:6.21px;top:11.65px;font:normal 900 19.74px/1 'Noto Sans CJK KR',sans-serif;color:#0a0a0a;transform:scaleX(1.070);transform-origin:0 0">Aa</div><div class="sw" style="left:4px;top:38.5px"><i style="width:8px;height:5px;background:#2a9a9a;margin-right:1.6px"></i><i style="width:8px;height:5px;background:#f09a38;margin-right:1.6px"></i><i style="width:8px;height:5px;background:#d8603a;margin-right:1.6px"></i><i style="width:8px;height:5px;background:#e09070;margin-right:1.6px"></i><i style="width:8px;height:5px;background:#a85a48;margin-right:1.6px"></i><i style="width:8px;height:5px;background:#3a8a6a;margin-right:1.6px"></i></div><div class="a" style="left:0px;top:0px;width:85px;height:48px;background:transparent;border-top:1px solid #f3f3f3;border-bottom:1px solid #f3f3f3"></div></div>
<div class="th" style="left:301.25px;top:166.75px;width:85px;height:48px;background:#fff"><div class="a" style="left:5px;top:5px;width:74px;height:1px;background:#9a9a9a"></div><div class="aa" style="left:5.98px;top:15.00px;font:normal 700 20.00px/1 'Liberation Sans',sans-serif;color:#0a0a0a;transform:scaleX(0.860);transform-origin:0 0">Aa</div><div class="sw" style="left:4px;top:38.5px"><i style="width:8px;height:5px;background:#6b4a6b;margin-right:1.6px"></i><i style="width:8px;height:5px;background:#9fb0c8;margin-right:1.6px"></i><i style="width:8px;height:5px;background:#5b6788;margin-right:1.6px"></i><i style="width:8px;height:5px;background:#6c6a90;margin-right:1.6px"></i><i style="width:8px;height:5px;background:#d9a79c;margin-right:1.6px"></i><i style="width:8px;height:5px;background:#c9a3b8;margin-right:1.6px"></i></div><div class="a" style="left:62px;top:43px;width:17px;height:1px;background:#e4e4e4"></div><div class="a" style="left:0px;top:0px;width:85px;height:48px;background:transparent;border-top:1px solid #f3f3f3;border-bottom:1px solid #f3f3f3"></div></div>
<div class="th" style="left:398px;top:166.75px;width:85px;height:48px;background:#000"><div class="aa" style="left:10.35px;top:10.11px;font:normal 700 19.29px/1 'Liberation Sans',sans-serif;color:#fff;transform:scaleX(0.690);transform-origin:0 0">Aa</div><div class="a" style="left:11px;top:29px;width:5px;height:1px;background:#555"></div><div class="sw" style="left:4.5px;top:38.5px"><i style="width:8px;height:5px;background:#4a8a5a;margin-right:1.6px"></i><i style="width:8px;height:5px;background:#3a8a90;margin-right:1.6px"></i><i style="width:8px;height:5px;background:#2a7a6a;margin-right:1.6px"></i><i style="width:8px;height:5px;background:#4a9a6a;margin-right:1.6px"></i><i style="width:8px;height:5px;background:#3a9a8a;margin-right:1.6px"></i><i style="width:8px;height:5px;background:#7a9a4a;margin-right:1.6px"></i></div></div>
<div class="th" style="left:494.75px;top:166.75px;width:85px;height:48px;background:#000"><div class="aa" style="left:7.86px;top:8.54px;font:normal 700 22.86px/1 'Liberation Sans',sans-serif;color:#fff;transform:scaleX(0.930);transform-origin:0 0">Aa</div><div class="sw" style="left:4.5px;top:38.5px"><i style="width:8px;height:5px;background:#5a4ae0;margin-right:1.6px"></i><i style="width:8px;height:5px;background:#b0a0f0;margin-right:1.6px"></i><i style="width:8px;height:5px;background:#50c080;margin-right:1.6px"></i><i style="width:8px;height:5px;background:#2a6a7a;margin-right:1.6px"></i><i style="width:8px;height:5px;background:#9a5ae0;margin-right:1.6px"></i><i style="width:8px;height:5px;background:#b0c040;margin-right:1.6px"></i></div></div>
<div class="th" style="left:10px;top:227.5px;width:85px;height:48px;background:#fff"><div class="a" style="left:0px;top:29.5px;width:85px;height:18.5px;background:#000"></div><div class="aa" style="left:6.52px;top:6.92px;font:normal 700 18.93px/1 'Liberation Sans',sans-serif;color:#0a0a0a;transform:scaleX(0.840);transform-origin:0 0">Aa</div><div class="sw" style="left:4.5px;top:38.75px"><i style="width:8px;height:5px;background:#e8a030;margin-right:1.6px"></i><i style="width:8px;height:5px;background:#38a8b8;margin-right:1.6px"></i><i style="width:8px;height:5px;background:#e86030;margin-right:1.6px"></i><i style="width:8px;height:5px;background:#6a7af0;margin-right:1.6px"></i><i style="width:8px;height:5px;background:#a8a8a0;margin-right:1.6px"></i><i style="width:8px;height:5px;background:#707070;margin-right:1.6px"></i></div><div class="a" style="left:0px;top:0px;width:85px;height:1px;background:#f3f3f3"></div></div>
<div class="th" style="left:107px;top:227.5px;width:85px;height:48px;background:#f3f2ef"><svg class="a" style="left:55px;top:0" width="30" height="34" viewBox="55 0 30 34"><path d="M59 0v8a26 22 0 0 0 26 22V0z" fill="#dfe5de"/><path d="M68 0v4a17 15 0 0 0 17 15V0z" fill="#e9ece7"/><path d="M65.400 5.300h15.300a7.650 5.300 0 0 1-15.300 0z" fill="#e9b7a0"/></svg><div class="aa" style="left:10.15px;top:11.66px;font:normal 700 24.33px/1 'Liberation Serif',serif;color:#353a34;transform:scaleX(1.030);transform-origin:0 0;-webkit-text-stroke:.3px #353a34">Aa</div><div class="sw" style="left:4.25px;top:38.75px"><i style="width:8px;height:5px;background:#a89048;margin-right:1.6px"></i><i style="width:8px;height:5px;background:#d09860;margin-right:1.6px"></i><i style="width:8px;height:5px;background:#98a8c8;margin-right:1.6px"></i><i style="width:8px;height:5px;background:#88a088;margin-right:1.6px"></i><i style="width:8px;height:5px;background:#508068;margin-right:1.6px"></i><i style="width:8px;height:5px;background:#b8a048;margin-right:1.6px"></i></div><div class="a" style="left:0px;top:47px;width:85px;height:1px;background:#cfcfcf"></div></div>
<div class="th" style="left:204.25px;top:227.5px;width:85px;height:48px;background:#fff"><svg class="a" style="left:18px;top:0" width="50" height="48" viewBox="18 0 50 48"><circle cx="44" cy="24" r="19.6" fill="none" stroke="#111" stroke-width="1"/><circle cx="42" cy="22.5" r="20" fill="#fbe3d6"/></svg><div class="aa" style="left:30.00px;top:13.84px;font:normal 400 17.86px/1 'Liberation Sans',sans-serif;color:#1a1a1a;transform:scaleX(1.080);transform-origin:0 0">Aa</div><div class="sw" style="left:4px;top:39px"><i style="width:8px;height:5px;background:#e8894a;margin-right:1.6px"></i><i style="width:8px;height:5px;background:#e07a5f;margin-right:1.6px"></i><i style="width:8px;height:5px;background:#d4a72c;margin-right:1.6px"></i><i style="width:8px;height:5px;background:#e066a0;margin-right:1.6px"></i><i style="width:8px;height:5px;background:#e07050;margin-right:1.6px"></i><i style="width:8px;height:5px;background:#c94a6a;margin-right:1.6px"></i></div><div class="a" style="left:0px;top:0px;width:85px;height:48px;background:transparent;border-top:1px solid #f3f3f3;border-bottom:1px solid #f3f3f3"></div></div>
<div class="th" style="left:301.25px;top:227.5px;width:85px;height:48px;background:#fff"><div class="a" style="left:0px;top:40.5px;width:85px;height:7.5px;background:linear-gradient(90deg,#e25a6c,#b24aa0 60%,#9c3fa6)"></div><div class="aa" style="left:5.82px;top:11.73px;font:normal 700 16.44px/1 'DejaVu Sans',sans-serif;color:#0a0a0a;transform:scaleX(1.070);transform-origin:0 0">Aa</div><div class="sw" style="left:4px;top:38.5px"><i style="width:8px;height:5px;background:#a02070;margin-right:1.6px"></i><i style="width:8px;height:5px;background:#9030a0;margin-right:1.6px"></i><i style="width:8px;height:5px;background:#e0a0d0;margin-right:1.6px"></i><i style="width:8px;height:5px;background:#f06030;margin-right:1.6px"></i><i style="width:8px;height:5px;background:#e03040;margin-right:1.6px"></i><i style="width:8px;height:5px;background:#f08878;margin-right:1.6px"></i></div><div class="a" style="left:0px;top:0px;width:85px;height:48px;background:transparent;border-top:1px solid #f3f3f3;border-bottom:1px solid #f3f3f3"></div></div>
<div class="th" style="left:398px;top:227.5px;width:85px;height:48px;background:#fff"><svg class="a" style="left:0;top:0" width="85" height="48"><circle cx="75" cy="4.1" r="1.25" fill="#e0e0e0"/><circle cx="80" cy="5.7" r="1.25" fill="#e0e0e0"/><circle cx="75" cy="12.4" r="1.25" fill="#e0e0e0"/><circle cx="80.3" cy="15.5" r="1.25" fill="#e0e0e0"/><circle cx="73.4" cy="19.9" r="1.25" fill="#e0e0e0"/><circle cx="80" cy="23.5" r="1.25" fill="#e0e0e0"/><circle cx="72.6" cy="27.7" r="1.25" fill="#e0e0e0"/><circle cx="80.3" cy="33" r="1.25" fill="#e0e0e0"/><circle cx="73" cy="35.5" r="1.25" fill="#e0e0e0"/><circle cx="79.7" cy="41.9" r="1.25" fill="#e0e0e0"/><circle cx="73.4" cy="44.2" r="1.25" fill="#e0e0e0"/></svg><div class="aa" style="left:11.32px;top:10.23px;font:italic 700 26.87px/1 'Liberation Serif',serif;color:#333;transform:scaleX(0.980);transform-origin:0 0;-webkit-text-stroke:.3px #333">Aa</div><div class="sw" style="left:4.5px;top:38.5px"><i style="width:8px;height:5px;background:#9a5a60;margin-right:1.6px"></i><i style="width:8px;height:5px;background:#d0a090;margin-right:1.6px"></i><i style="width:8px;height:5px;background:#d0b090;margin-right:1.6px"></i><i style="width:8px;height:5px;background:#b0a888;margin-right:1.6px"></i><i style="width:8px;height:5px;background:#6a8a9a;margin-right:1.6px"></i><i style="width:8px;height:5px;background:#5a7078;margin-right:1.6px"></i></div><div class="a" style="left:0px;top:0px;width:85px;height:48px;background:transparent;border-top:1px solid #f3f3f3;border-bottom:1px solid #f3f3f3"></div></div>
<div class="th" style="left:494.75px;top:227.5px;width:85px;height:48px;background:#fff"><div class="aa" style="left:5.13px;top:0.14px;font:normal 400 28.78px/1 'Noto Sans CJK KR',sans-serif;color:#111;transform:scaleX(0.930);transform-origin:0 0">Aa</div><div class="sw" style="left:5px;top:39.25px"><i style="width:7.8px;height:5px;background:#1a6a9a;margin-right:1.5px"></i><i style="width:7.8px;height:5px;background:#e87a2a;margin-right:1.5px"></i><i style="width:7.8px;height:5px;background:#1a7a2a;margin-right:1.5px"></i><i style="width:7.8px;height:5px;background:#1a9ad0;margin-right:1.5px"></i><i style="width:7.8px;height:5px;background:#a020a0;margin-right:1.5px"></i><i style="width:7.8px;height:5px;background:#50a030;margin-right:1.5px"></i></div><div class="a" style="left:0px;top:0px;width:85px;height:48px;background:transparent;border:1px solid #bdbdbd"></div></div>
<div class="th" style="left:10px;top:289.25px;width:85px;height:48px;background:#fff"><div class="aa" style="left:5.23px;top:1.34px;font:normal 400 28.04px/1 'Noto Sans CJK KR',sans-serif;color:#111;transform:scaleX(0.980);transform-origin:0 0">Aa</div><div class="sw" style="left:5px;top:38.75px"><i style="width:8px;height:4.5px;background:#4472c4;margin-right:1.2px"></i><i style="width:8px;height:4.5px;background:#ed7d31;margin-right:1.2px"></i><i style="width:8px;height:4.5px;background:#a5a5a5;margin-right:1.2px"></i><i style="width:8px;height:4.5px;background:#ffc000;margin-right:1.2px"></i><i style="width:8px;height:4.5px;background:#5b9bd5;margin-right:1.2px"></i><i style="width:8px;height:4.5px;background:#70ad47;margin-right:1.2px"></i></div><div class="a" style="left:0px;top:0px;width:85px;height:48px;background:transparent;border:1px solid #cdcdcd"></div></div>
<div class="th" style="left:107px;top:289.25px;width:85px;height:48px;background:#fff"><div class="a" style="left:11.75px;top:8.25px;width:61.25px;height:28.75px;background:#f02000"></div><div class="a" style="left:11.75px;top:0;width:61.25px;height:37px;overflow:hidden"><div class="aa" style="left:-5.25px;top:3.79px;font:normal 400 26.29px/1 'Liberation Sans',sans-serif;color:#fff;-webkit-text-stroke:.35px #fff">Aa</div></div><div class="a" style="left:19px;top:12.6px;width:54px;height:1px;background:#fff"></div><svg class="a" style="left:40px;top:36px" width="6" height="4"><path d="M0 0h4l-2 3z" fill="#f02000"/></svg><div class="sw" style="left:4.75px;top:38.75px"><i style="width:8px;height:4.5px;background:#e81a0a;margin-right:1.2px"></i><i style="width:8px;height:4.5px;background:#f08020;margin-right:1.2px"></i><i style="width:8px;height:4.5px;background:#a0c040;margin-right:1.2px"></i><i style="width:8px;height:4.5px;background:#40c0a0;margin-right:1.2px"></i><i style="width:8px;height:4.5px;background:#2090c0;margin-right:1.2px"></i><i style="width:8px;height:4.5px;background:#b060e0;margin-right:1.2px"></i></div><div class="a" style="left:0px;top:0px;width:85px;height:48px;background:transparent;border:1px solid #cdcdcd"></div></div>
<div class="th" style="left:204.25px;top:289.25px;width:85px;height:48px;background:#2b3a32"><div class="a" style="left:62px;top:0px;width:23px;height:48px;background:linear-gradient(180deg,#c2e8bc 0%,#b5e0a2 30%,#c1e5a5 58%,#b3da80 85%,#aad375 100%)"></div><div class="a" style="left:61.5px;top:0px;width:1px;height:48px;background:#8fb8a8"></div><div class="a" style="left:6.5px;top:0px;width:1px;height:48px;background:#4c6157"></div><div class="aa" style="left:5.98px;top:1.34px;font:normal 400 28.04px/1 'Noto Sans CJK KR',sans-serif;color:#fff;transform:scaleX(0.980);transform-origin:0 0">Aa</div><div class="sw" style="left:4.5px;top:38.75px"><i style="width:8px;height:4.5px;background:#90d090;margin-right:1.2px"></i><i style="width:8px;height:4.5px;background:#50c8a0;margin-right:1.2px"></i><i style="width:8px;height:4.5px;background:#40a8e0;margin-right:1.2px"></i><i style="width:8px;height:4.5px;background:#e0c040;margin-right:1.2px"></i><i style="width:8px;height:4.5px;background:#f0a030;margin-right:1.2px"></i><i style="width:8px;height:4.5px;background:#80c8c0;margin-right:1.2px"></i></div></div>
<div class="th" style="left:301.25px;top:289.25px;width:85px;height:48px;background:radial-gradient(ellipse at 50% 40%,#2d6d73 0%,#1d5359 60%,#164449 100%)"><div class="a" style="left:72px;top:0.75px;width:5px;height:7.5px;background:#d01020"></div><div class="aa" style="left:4.66px;top:6.74px;font:normal 200 24.66px/1 'DejaVu Sans',sans-serif;color:#fff;transform:scaleX(1.130);transform-origin:0 0">Aa</div><div class="sw" style="left:4.25px;top:38.75px"><i style="width:8px;height:4.5px;background:#d02020;margin-right:1.2px"></i><i style="width:8px;height:4.5px;background:#f07020;margin-right:1.2px"></i><i style="width:8px;height:4.5px;background:#f0c020;margin-right:1.2px"></i><i style="width:8px;height:4.5px;background:#70b090;margin-right:1.2px"></i><i style="width:8px;height:4.5px;background:#5090a0;margin-right:1.2px"></i><i style="width:8px;height:4.5px;background:#c060b0;margin-right:1.2px"></i></div></div>
<div class="th" style="left:398px;top:289.25px;width:85px;height:48px;background:linear-gradient(180deg,#f3cf9c,#eec088 50%,#f1c993)"><div class="a" style="left:0px;top:22.3px;width:85px;height:4px;background:#3a2b22"></div><div class="a" style="left:16.4px;top:9.2px;width:53px;height:28.8px;background:linear-gradient(180deg,#fff 0%,#f4f4f4 45%,#e4e4e4 50%,#f6f6f6 55%,#ececec 100%);box-shadow:0 1px 2px rgba(0,0,0,.3)"></div><div class="aa" style="left:6.39px;top:4.16px;font:normal 400 26.12px/1 'Liberation Serif',serif;color:#3a3030;transform:scaleX(0.820);transform-origin:0 0">Aa</div><div class="sw" style="left:4.6px;top:38.8px"><i style="width:7.8px;height:4.5px;background:#80a830;margin-right:1.4px"></i><i style="width:7.8px;height:4.5px;background:#30a080;margin-right:1.4px"></i><i style="width:7.8px;height:4.5px;background:#3070b0;margin-right:1.4px"></i><i style="width:7.8px;height:4.5px;background:#c03020;margin-right:1.4px"></i><i style="width:7.8px;height:4.5px;background:#e88020;margin-right:1.4px"></i><i style="width:7.8px;height:4.5px;background:#e8b830;margin-right:1.4px"></i></div></div>
<div class="th" style="left:494.75px;top:289.25px;width:85px;height:48px;background:#fff"><div class="a" style="left:0px;top:24px;width:63px;height:16px;background:#30a8c8"></div><div class="a" style="left:63px;top:10px;width:22px;height:30px;background:linear-gradient(90deg,#cfcfcf,#e9e9e9)"></div><div class="sw" style="left:14.5px;top:38.8px"><i style="width:7.8px;height:4.5px;background:#f0b820;margin-right:1.4px"></i><i style="width:7.8px;height:4.5px;background:#90c030;margin-right:1.4px"></i><i style="width:7.8px;height:4.5px;background:#e87820;margin-right:1.4px"></i><i style="width:7.8px;height:4.5px;background:#30b090;margin-right:1.4px"></i><i style="width:7.8px;height:4.5px;background:#d83030;margin-right:1.4px"></i></div><div class="a" style="left:0px;top:0px;width:85px;height:48px;background:transparent;border:1px solid #cdcdcd"></div></div>
<div class="th" style="left:10px;top:350px;width:85px;height:48px;background:#fff"><div class="a" style="left:4.25px;top:3.75px;width:77px;height:40px;background:radial-gradient(ellipse at 55% 50%,#8b3a7c 0%,#5a2765 55%,#3a1b4d 100%)"></div><div class="a" style="left:72.5px;top:0.75px;width:4.25px;height:7.25px;background:#d0207a"></div><div class="aa" style="left:5.41px;top:6.49px;font:normal 200 24.66px/1 'DejaVu Sans',sans-serif;color:#fff;transform:scaleX(1.130);transform-origin:0 0">Aa</div><div class="sw" style="left:5px;top:38.75px"><i style="width:8px;height:5px;background:#c0207a;margin-right:1.2px"></i><i style="width:8px;height:5px;background:#e04060;margin-right:1.2px"></i><i style="width:8px;height:5px;background:#f07030;margin-right:1.2px"></i><i style="width:8px;height:5px;background:#f0a020;margin-right:1.2px"></i><i style="width:8px;height:5px;background:#a060f0;margin-right:1.2px"></i><i style="width:8px;height:5px;background:#d050e0;margin-right:1.2px"></i></div><div class="a" style="left:0px;top:0px;width:85px;height:48px;background:transparent;border:1px solid #cdcdcd"></div></div>
<div class="th" style="left:107px;top:350px;width:85px;height:48px;background:radial-gradient(ellipse at 55% 0%,#454951 0%,#2f3238 55%,#24262b 100%)"><div class="aa" style="left:5.18px;top:6.52px;font:normal 200 24.32px/1 'DejaVu Sans',sans-serif;color:#fff;transform:scaleX(1.130);transform-origin:0 0">Aa</div><div class="sw" style="left:4.75px;top:38.25px"><i style="width:8px;height:5.5px;background:#808078;margin-right:1.2px"></i><i style="width:8px;height:5.5px;background:#c8c890;margin-right:1.2px"></i><i style="width:8px;height:5.5px;background:#e8d070;margin-right:1.2px"></i><i style="width:8px;height:5.5px;background:#f0c050;margin-right:1.2px"></i><i style="width:8px;height:5.5px;background:#f0a030;margin-right:1.2px"></i><i style="width:8px;height:5.5px;background:#e08020;margin-right:1.2px"></i></div></div>
<div class="th" style="left:204.25px;top:350px;width:85px;height:48px;background:#fff"><div class="aa" style="left:5.03px;top:5.56px;font:normal 300 21.96px/1 'Noto Sans CJK KR',sans-serif;color:#333">Aa</div><div class="a" style="left:8px;top:30px;width:68px;height:1px;background:#e8e8e8"></div><div class="sw" style="left:4.5px;top:38.25px"><i style="width:8px;height:5.5px;background:#e08020;margin-right:1.2px"></i><i style="width:8px;height:5.5px;background:#c86030;margin-right:1.2px"></i><i style="width:8px;height:5.5px;background:#905a40;margin-right:1.2px"></i><i style="width:8px;height:5.5px;background:#a09060;margin-right:1.2px"></i><i style="width:8px;height:5.5px;background:#c8c090;margin-right:1.2px"></i><i style="width:8px;height:5.5px;background:#a0a890;margin-right:1.2px"></i></div><div class="a" style="left:0px;top:43.75px;width:85px;height:4.25px;background:#c85a20"></div><div class="a" style="left:0px;top:0px;width:85px;height:48px;background:transparent;border:1px solid #cdcdcd;border-bottom:0"></div></div>
<div class="th" style="left:301.25px;top:350px;width:85px;height:48px;background:linear-gradient(160deg,#2f9ad0 0%,#33a6dc 40%,#2488c0 75%,#1f78ac 100%)"><div class="a" style="left:40px;top:0px;width:45px;height:20px;background:linear-gradient(225deg,rgba(120,215,245,.75),rgba(120,215,245,0) 70%)"></div><svg class="a" style="left:0;top:0" width="85" height="48"><path d="M50 36L85 3M54 36L85 7" stroke="#9fdcf5" stroke-width=".7" fill="none" opacity=".8"/></svg><div class="aa" style="left:4.66px;top:6.49px;font:normal 200 24.66px/1 'DejaVu Sans',sans-serif;color:#fff;transform:scaleX(1.130);transform-origin:0 0">Aa</div><div class="sw" style="left:4.25px;top:38.25px"><i style="width:8px;height:5.5px;background:#1a3a7a;margin-right:1.2px"></i><i style="width:8px;height:5.5px;background:#c020a0;margin-right:1.2px"></i><i style="width:8px;height:5.5px;background:#20a080;margin-right:1.2px"></i><i style="width:8px;height:5.5px;background:#70b030;margin-right:1.2px"></i><i style="width:8px;height:5.5px;background:#f08030;margin-right:1.2px"></i><i style="width:8px;height:5.5px;background:#e02020;margin-right:1.2px"></i></div></div>
<div class="th" style="left:398px;top:350px;width:85px;height:48px;background:#8ab3c2"><svg class="a" style="left:0;top:0" width="85" height="48"><circle cx="0" cy="0" r="1.15" fill="#e4eff3"/><circle cx="37.3" cy="23.7" r="1.15" fill="#e4eff3"/><circle cx="74.6" cy="47.4" r="1.15" fill="#e4eff3"/><circle cx="26.9" cy="23.1" r="1.15" fill="#e4eff3"/><circle cx="64.2" cy="46.8" r="1.15" fill="#e4eff3"/><circle cx="16.5" cy="22.5" r="1.15" fill="#e4eff3"/><circle cx="53.8" cy="46.2" r="1.15" fill="#e4eff3"/><circle cx="6.1" cy="21.9" r="1.15" fill="#e4eff3"/><circle cx="43.4" cy="45.6" r="1.15" fill="#e4eff3"/><circle cx="80.7" cy="21.3" r="1.15" fill="#e4eff3"/><circle cx="33" cy="45" r="1.15" fill="#e4eff3"/><circle cx="70.3" cy="20.7" r="1.15" fill="#e4eff3"/><circle cx="22.6" cy="44.4" r="1.15" fill="#e4eff3"/><circle cx="59.9" cy="20.1" r="1.15" fill="#e4eff3"/><circle cx="12.2" cy="43.8" r="1.15" fill="#e4eff3"/><circle cx="49.5" cy="19.5" r="1.15" fill="#e4eff3"/><circle cx="1.8" cy="43.2" r="1.15" fill="#e4eff3"/><circle cx="39.1" cy="18.9" r="1.15" fill="#e4eff3"/><circle cx="76.4" cy="42.6" r="1.15" fill="#e4eff3"/><circle cx="28.7" cy="18.3" r="1.15" fill="#e4eff3"/><circle cx="66" cy="42" r="1.15" fill="#e4eff3"/><circle cx="18.3" cy="17.7" r="1.15" fill="#e4eff3"/><circle cx="55.6" cy="41.4" r="1.15" fill="#e4eff3"/><circle cx="7.9" cy="17.1" r="1.15" fill="#e4eff3"/><circle cx="45.2" cy="40.8" r="1.15" fill="#e4eff3"/><circle cx="82.5" cy="16.5" r="1.15" fill="#e4eff3"/><circle cx="34.8" cy="40.2" r="1.15" fill="#e4eff3"/><circle cx="72.1" cy="15.9" r="1.15" fill="#e4eff3"/><circle cx="24.4" cy="39.6" r="1.15" fill="#e4eff3"/><circle cx="61.7" cy="15.3" r="1.15" fill="#e4eff3"/><circle cx="14" cy="39" r="1.15" fill="#e4eff3"/><circle cx="51.3" cy="14.7" r="1.15" fill="#e4eff3"/><circle cx="3.6" cy="38.4" r="1.15" fill="#e4eff3"/><circle cx="40.9" cy="14.1" r="1.15" fill="#e4eff3"/><circle cx="78.2" cy="37.8" r="1.15" fill="#e4eff3"/><circle cx="30.5" cy="13.5" r="1.15" fill="#e4eff3"/><circle cx="67.8" cy="37.2" r="1.15" fill="#e4eff3"/><circle cx="20.1" cy="12.9" r="1.15" fill="#e4eff3"/><circle cx="57.4" cy="36.6" r="1.15" fill="#e4eff3"/><circle cx="9.7" cy="12.3" r="1.15" fill="#e4eff3"/><circle cx="47" cy="36" r="1.15" fill="#e4eff3"/><circle cx="84.3" cy="11.7" r="1.15" fill="#e4eff3"/><circle cx="36.6" cy="35.4" r="1.15" fill="#e4eff3"/><circle cx="73.9" cy="11.1" r="1.15" fill="#e4eff3"/><circle cx="26.2" cy="34.8" r="1.15" fill="#e4eff3"/><circle cx="63.5" cy="10.5" r="1.15" fill="#e4eff3"/><circle cx="15.8" cy="34.2" r="1.15" fill="#e4eff3"/><circle cx="53.1" cy="9.9" r="1.15" fill="#e4eff3"/><circle cx="5.4" cy="33.6" r="1.15" fill="#e4eff3"/><circle cx="42.7" cy="9.3" r="1.15" fill="#e4eff3"/><circle cx="80" cy="33" r="1.15" fill="#e4eff3"/><circle cx="32.3" cy="8.7" r="1.15" fill="#e4eff3"/><circle cx="69.6" cy="32.4" r="1.15" fill="#e4eff3"/><circle cx="21.9" cy="8.1" r="1.15" fill="#e4eff3"/><circle cx="59.2" cy="31.8" r="1.15" fill="#e4eff3"/><circle cx="11.5" cy="7.5" r="1.15" fill="#e4eff3"/><circle cx="48.8" cy="31.2" r="1.15" fill="#e4eff3"/><circle cx="1.1" cy="6.9" r="1.15" fill="#e4eff3"/><circle cx="38.4" cy="30.6" r="1.15" fill="#e4eff3"/><circle cx="75.7" cy="6.3" r="1.15" fill="#e4eff3"/><circle cx="28" cy="30" r="1.15" fill="#e4eff3"/><circle cx="65.3" cy="5.7" r="1.15" fill="#e4eff3"/><circle cx="17.6" cy="29.4" r="1.15" fill="#e4eff3"/><circle cx="54.9" cy="5.1" r="1.15" fill="#e4eff3"/><circle cx="7.2" cy="28.8" r="1.15" fill="#e4eff3"/><circle cx="44.5" cy="4.5" r="1.15" fill="#e4eff3"/><circle cx="81.8" cy="28.2" r="1.15" fill="#e4eff3"/><circle cx="34.1" cy="3.9" r="1.15" fill="#e4eff3"/><circle cx="71.4" cy="27.6" r="1.15" fill="#e4eff3"/><circle cx="23.7" cy="3.3" r="1.15" fill="#e4eff3"/><circle cx="61" cy="27" r="1.15" fill="#e4eff3"/><circle cx="13.3" cy="2.7" r="1.15" fill="#e4eff3"/><circle cx="50.6" cy="26.4" r="1.15" fill="#e4eff3"/><circle cx="2.9" cy="2.1" r="1.15" fill="#e4eff3"/><circle cx="40.2" cy="25.8" r="1.15" fill="#e4eff3"/><circle cx="77.5" cy="1.5" r="1.15" fill="#e4eff3"/><circle cx="29.8" cy="25.2" r="1.15" fill="#e4eff3"/><circle cx="67.1" cy="0.9" r="1.15" fill="#e4eff3"/><circle cx="19.4" cy="24.6" r="1.15" fill="#e4eff3"/><circle cx="56.7" cy="0.3" r="1.15" fill="#e4eff3"/><circle cx="9" cy="24" r="1.15" fill="#e4eff3"/><circle cx="46.3" cy="47.7" r="1.15" fill="#e4eff3"/><circle cx="83.6" cy="23.4" r="1.15" fill="#e4eff3"/><circle cx="35.9" cy="47.1" r="1.15" fill="#e4eff3"/><circle cx="73.2" cy="22.8" r="1.15" fill="#e4eff3"/><circle cx="25.5" cy="46.5" r="1.15" fill="#e4eff3"/><circle cx="62.8" cy="22.2" r="1.15" fill="#e4eff3"/><circle cx="15.1" cy="45.9" r="1.15" fill="#e4eff3"/><circle cx="52.4" cy="21.6" r="1.15" fill="#e4eff3"/><circle cx="4.7" cy="45.3" r="1.15" fill="#e4eff3"/><circle cx="42" cy="21" r="1.15" fill="#e4eff3"/><circle cx="79.3" cy="44.7" r="1.15" fill="#e4eff3"/><circle cx="31.6" cy="20.4" r="1.15" fill="#e4eff3"/><circle cx="68.9" cy="44.1" r="1.15" fill="#e4eff3"/><circle cx="21.2" cy="19.8" r="1.15" fill="#e4eff3"/><circle cx="58.5" cy="43.5" r="1.15" fill="#e4eff3"/><circle cx="10.8" cy="19.2" r="1.15" fill="#e4eff3"/><circle cx="48.1" cy="42.9" r="1.15" fill="#e4eff3"/><circle cx="0.4" cy="18.6" r="1.15" fill="#e4eff3"/><circle cx="37.7" cy="42.3" r="1.15" fill="#e4eff3"/><circle cx="75" cy="18" r="1.15" fill="#e4eff3"/><circle cx="27.3" cy="41.7" r="1.15" fill="#e4eff3"/><circle cx="64.6" cy="17.4" r="1.15" fill="#e4eff3"/><circle cx="16.9" cy="41.1" r="1.15" fill="#e4eff3"/><circle cx="54.2" cy="16.8" r="1.15" fill="#e4eff3"/><circle cx="6.5" cy="40.5" r="1.15" fill="#e4eff3"/><circle cx="43.8" cy="16.2" r="1.15" fill="#e4eff3"/><circle cx="81.1" cy="39.9" r="1.15" fill="#e4eff3"/><circle cx="33.4" cy="15.6" r="1.15" fill="#e4eff3"/><circle cx="70.7" cy="39.3" r="1.15" fill="#e4eff3"/><circle cx="23" cy="15" r="1.15" fill="#e4eff3"/><circle cx="60.3" cy="38.7" r="1.15" fill="#e4eff3"/><circle cx="12.6" cy="14.4" r="1.15" fill="#e4eff3"/><circle cx="49.9" cy="38.1" r="1.15" fill="#e4eff3"/><circle cx="2.2" cy="13.8" r="1.15" fill="#e4eff3"/><circle cx="39.5" cy="37.5" r="1.15" fill="#e4eff3"/><circle cx="76.8" cy="13.2" r="1.15" fill="#e4eff3"/><circle cx="29.1" cy="36.9" r="1.15" fill="#e4eff3"/><circle cx="66.4" cy="12.6" r="1.15" fill="#e4eff3"/><circle cx="18.7" cy="36.3" r="1.15" fill="#e4eff3"/><circle cx="56" cy="12" r="1.15" fill="#e4eff3"/><circle cx="8.3" cy="35.7" r="1.15" fill="#e4eff3"/><circle cx="45.6" cy="11.4" r="1.15" fill="#e4eff3"/><circle cx="82.9" cy="35.1" r="1.15" fill="#e4eff3"/><circle cx="35.2" cy="10.8" r="1.15" fill="#e4eff3"/><circle cx="72.5" cy="34.5" r="1.15" fill="#e4eff3"/><circle cx="24.8" cy="10.2" r="1.15" fill="#e4eff3"/><circle cx="62.1" cy="33.9" r="1.15" fill="#e4eff3"/><circle cx="14.4" cy="9.6" r="1.15" fill="#e4eff3"/><circle cx="51.7" cy="33.3" r="1.15" fill="#e4eff3"/><circle cx="4" cy="9" r="1.15" fill="#e4eff3"/><circle cx="41.3" cy="32.7" r="1.15" fill="#e4eff3"/><circle cx="78.6" cy="8.4" r="1.15" fill="#e4eff3"/><circle cx="30.9" cy="32.1" r="1.15" fill="#e4eff3"/><circle cx="68.2" cy="7.8" r="1.15" fill="#e4eff3"/><circle cx="20.5" cy="31.5" r="1.15" fill="#e4eff3"/><circle cx="57.8" cy="7.2" r="1.15" fill="#e4eff3"/><circle cx="10.1" cy="30.9" r="1.15" fill="#e4eff3"/><circle cx="47.4" cy="6.6" r="1.15" fill="#e4eff3"/><circle cx="84.7" cy="30.3" r="1.15" fill="#e4eff3"/><circle cx="37" cy="6" r="1.15" fill="#e4eff3"/><circle cx="74.3" cy="29.7" r="1.15" fill="#e4eff3"/><circle cx="26.6" cy="5.4" r="1.15" fill="#e4eff3"/><circle cx="63.9" cy="29.1" r="1.15" fill="#e4eff3"/><circle cx="16.2" cy="4.8" r="1.15" fill="#e4eff3"/><circle cx="53.5" cy="28.5" r="1.15" fill="#e4eff3"/><circle cx="5.8" cy="4.2" r="1.15" fill="#e4eff3"/><circle cx="43.1" cy="27.9" r="1.15" fill="#e4eff3"/><circle cx="80.4" cy="3.6" r="1.15" fill="#e4eff3"/><circle cx="32.7" cy="27.3" r="1.15" fill="#e4eff3"/><circle cx="70" cy="3" r="1.15" fill="#e4eff3"/><circle cx="22.3" cy="26.7" r="1.15" fill="#e4eff3"/><circle cx="59.6" cy="2.4" r="1.15" fill="#e4eff3"/><circle cx="11.9" cy="26.1" r="1.15" fill="#e4eff3"/><circle cx="49.2" cy="1.8" r="1.15" fill="#e4eff3"/><circle cx="1.5" cy="25.5" r="1.15" fill="#e4eff3"/><circle cx="38.8" cy="1.2" r="1.15" fill="#e4eff3"/><circle cx="76.1" cy="24.9" r="1.15" fill="#e4eff3"/><circle cx="28.4" cy="0.6" r="1.15" fill="#e4eff3"/><circle cx="65.7" cy="24.3" r="1.15" fill="#e4eff3"/><circle cx="18" cy="0" r="1.15" fill="#e4eff3"/><circle cx="55.3" cy="23.7" r="1.15" fill="#e4eff3"/><circle cx="7.6" cy="47.4" r="1.15" fill="#e4eff3"/><circle cx="44.9" cy="23.1" r="1.15" fill="#e4eff3"/><circle cx="82.2" cy="46.8" r="1.15" fill="#e4eff3"/><circle cx="34.5" cy="22.5" r="1.15" fill="#e4eff3"/><circle cx="71.8" cy="46.2" r="1.15" fill="#e4eff3"/><circle cx="24.1" cy="21.9" r="1.15" fill="#e4eff3"/><circle cx="61.4" cy="45.6" r="1.15" fill="#e4eff3"/><circle cx="13.7" cy="21.3" r="1.15" fill="#e4eff3"/><circle cx="51" cy="45" r="1.15" fill="#e4eff3"/><circle cx="3.3" cy="20.7" r="1.15" fill="#e4eff3"/><circle cx="40.6" cy="44.4" r="1.15" fill="#e4eff3"/><circle cx="77.9" cy="20.1" r="1.15" fill="#e4eff3"/><circle cx="30.2" cy="43.8" r="1.15" fill="#e4eff3"/><circle cx="67.5" cy="19.5" r="1.15" fill="#e4eff3"/><circle cx="19.8" cy="43.2" r="1.15" fill="#e4eff3"/><circle cx="57.1" cy="18.9" r="1.15" fill="#e4eff3"/><circle cx="9.4" cy="42.6" r="1.15" fill="#e4eff3"/><circle cx="46.7" cy="18.3" r="1.15" fill="#e4eff3"/><circle cx="84" cy="42" r="1.15" fill="#e4eff3"/><circle cx="36.3" cy="17.7" r="1.15" fill="#e4eff3"/><circle cx="73.6" cy="41.4" r="1.15" fill="#e4eff3"/><circle cx="25.9" cy="17.1" r="1.15" fill="#e4eff3"/><circle cx="63.2" cy="40.8" r="1.15" fill="#e4eff3"/><circle cx="15.5" cy="16.5" r="1.15" fill="#e4eff3"/><circle cx="52.8" cy="40.2" r="1.15" fill="#e4eff3"/><circle cx="5.1" cy="15.9" r="1.15" fill="#e4eff3"/><circle cx="42.4" cy="39.6" r="1.15" fill="#e4eff3"/><circle cx="79.7" cy="15.3" r="1.15" fill="#e4eff3"/></svg><div class="a" style="left:9px;top:8px;width:67px;height:30.4px;background:#fff"></div><div class="a" style="left:36.6px;top:10px;width:11.8px;height:3.5px;background:#c9c9c9"></div><div class="aa" style="left:6.13px;top:6.48px;font:normal 400 24.73px/1 'DejaVu Sans',sans-serif;color:#111;transform:scaleX(1.080);transform-origin:0 0;-webkit-text-stroke:.35px #fff;paint-order:stroke fill">Aa</div><div class="sw" style="left:4.6px;top:39px"><i style="width:7.8px;height:4.6px;background:#2098d8;margin-right:1.4px"></i><i style="width:7.8px;height:4.6px;background:#2878c0;margin-right:1.4px"></i><i style="width:7.8px;height:4.6px;background:#30c0d0;margin-right:1.4px"></i><i style="width:7.8px;height:4.6px;background:#30b898;margin-right:1.4px"></i><i style="width:7.8px;height:4.6px;background:#308858;margin-right:1.4px"></i><i style="width:7.8px;height:4.6px;background:#58b0a8;margin-right:1.4px"></i></div></div>
<div class="th" style="left:494.75px;top:350px;width:85px;height:48px;background:#1a9ae0"><div class="a" style="left:0px;top:14px;width:85px;height:13.6px;background:#fff"></div><div class="a" style="left:0;top:14px;width:85px;height:13.6px;overflow:hidden"><div class="aa" style="left:5.20px;top:-8.19px;font:normal 400 24.29px/1 'Liberation Sans',sans-serif;color:#1a9ae0">Aa</div></div><div class="sw" style="left:4.7px;top:39px"><i style="width:7.8px;height:4.6px;background:#f0c020;margin-right:1.4px"></i><i style="width:7.8px;height:4.6px;background:#a0c830;margin-right:1.4px"></i><i style="width:7.8px;height:4.6px;background:#30c080;margin-right:1.4px"></i><i style="width:7.8px;height:4.6px;background:#f040a0;margin-right:1.4px"></i><i style="width:7.8px;height:4.6px;background:#909090;margin-right:1.4px"></i><i style="width:7.8px;height:4.6px;background:#f08020;margin-right:1.4px"></i></div></div>
<div class="a" style="left:10px;top:410px;width:85px;height:1px;background:#9fd3d6"></div>
<div class="a" style="left:107px;top:410px;width:85px;height:1px;background:#d8d8d8"></div>
<div class="a" style="left:204.25px;top:410px;width:85px;height:1px;background:#d8d8d8"></div>
<div class="a" style="left:301.25px;top:410px;width:85px;height:1px;background:#d8d8d8"></div>
<div class="a" style="left:398px;top:410px;width:85px;height:1px;background:#d8d8d8"></div>
<div class="a" style="left:494.75px;top:410px;width:85px;height:1px;background:#d8d8d8"></div>
<div class="a" style="left:495.5px;top:288.5px;width:84.5px;height:24.5px;background:#fff;border-radius:2px;box-shadow:0 1px 4px rgba(0,0,0,.28),0 0 1px rgba(0,0,0,.3)"></div>
<svg class="a" style="left:530px;top:282px" width="16" height="8"><path d="M1 7.5L8 1l7 6.5z" fill="#fff" stroke="#d4d4d4" stroke-width=".8"/><rect x="1" y="6.8" width="14" height="1.4" fill="#fff"/></svg>
<div class="t" style="left:508.5px;top:295px;font-size:12px;line-height:14px;letter-spacing:.25px;color:#242424">Office 테마</div>
</body></html>
